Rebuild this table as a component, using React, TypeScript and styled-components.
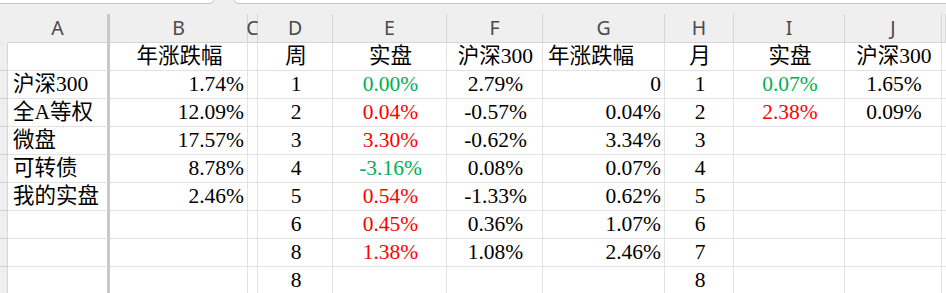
import { Fragment } from 'react'
import styled, { createGlobalStyle } from 'styled-components'

const GlobalStyle = createGlobalStyle`
  html, body {
    margin: 0;
    padding: 0;
    background: #FFFFFF;
    overflow: hidden;
  }
`

const COLUMNS = '8px 102px 138px 10px 75px 114px 96px 122px 69px 111px 97px 1fr'

type Align = 'left' | 'center' | 'right'
type Tone = 'black' | 'red' | 'green'

const TONES: Record<Tone, string> = {
  black: '#000000',
  red: '#FF0000',
  green: '#00B050'
}

const Page = styled.div`
  position: relative;
  width: 946px;
  height: 293px;
  overflow: hidden;
  background: #FFFFFF;
`

const TopStrip = styled.div`
  height: 3px;
  background: #FFFFFF;
  border-bottom: 1px solid #C4C4C4;
`

const TabNotch = styled.svg`
  position: absolute;
  left: 209px;
  top: 0;
`

const HeaderBand = styled.div`
  background: #EFEFEF;
  padding-top: 10px;
`

const Grid = styled.div`
  display: grid;
  grid-template-columns: ${COLUMNS};
`

const Corner = styled.div`
  height: 29px;
`

const ColHead = styled.div<{ $freeze?: boolean }>`
  box-sizing: border-box;
  height: 29px;
  min-width: 0;
  display: flex;
  align-items: center;
  justify-content: center;
  overflow: visible;
  white-space: nowrap;
  border-bottom: 1px solid #D6D6D6;
  border-right: ${({ $freeze }) => ($freeze ? '3px solid #C8C8C8' : '1px solid #D6D6D6')};
  font-family: 'Noto Sans', 'Liberation Sans', sans-serif;
  font-size: 19.5px;
  color: #4A4A4A;
  padding-bottom: 1px;
`

const RowHead = styled.div`
  box-sizing: border-box;
  height: 28px;
  background: #EFEFEF;
  border-right: 1px solid #D6D6D6;
  border-bottom: 1px solid #D0D0D0;
`

const Cell = styled.div<{ $align: Align; $tone: Tone; $freeze?: boolean }>`
  box-sizing: border-box;
  height: 28px;
  border-bottom: 1px solid #E1E1E1;
  border-right: ${({ $freeze }) => ($freeze ? '3px solid #C8C8C8' : '1px solid #E1E1E1')};
  padding: 0 3px 0 5px;
  display: flex;
  align-items: flex-end;
  justify-content: ${({ $align }) =>
    $align === 'left' ? 'flex-start' : $align === 'right' ? 'flex-end' : 'center'};
  white-space: nowrap;
  overflow: visible;
  font-family: 'Liberation Serif', 'Noto Sans CJK SC', serif;
  font-size: 21.5px;
  line-height: 27px;
  color: ${({ $tone }) => TONES[$tone]};
`

type CellData = { text: string; tone?: Tone }

// alignment per column (A..K) for the title row and for the value rows
const headAlign: Align[] = ['left', 'center', 'center', 'center', 'center', 'center', 'left', 'center', 'center', 'center', 'left']
const bodyAlign: Align[] = ['left', 'right', 'center', 'center', 'center', 'center', 'right', 'center', 'center', 'center', 'left']

const letters = ['A', 'B', 'C', 'D', 'E', 'F', 'G', 'H', 'I', 'J', '']

const r = (t: string): CellData => ({ text: t, tone: 'red' })
const g = (t: string): CellData => ({ text: t, tone: 'green' })
const b = (t: string): CellData => ({ text: t })

const rows: CellData[][] = [
  [b(''), b('年涨跌幅'), b(''), b('周'), b('实盘'), b('沪深300'), b('年涨跌幅'), b('月'), b('实盘'), b('沪深300'), b('')],
  [b('沪深300'), b('1.74%'), b(''), b('1'), g('0.00%'), b('2.79%'), b('0'), b('1'), g('0.07%'), b('1.65%'), b('')],
  [b('全A等权'), b('12.09%'), b(''), b('2'), r('0.04%'), b('-0.57%'), b('0.04%'), b('2'), r('2.38%'), b('0.09%'), b('')],
  [b('微盘'), b('17.57%'), b(''), b('3'), r('3.30%'), b('-0.62%'), b('3.34%'), b('3'), b(''), b(''), b('')],
  [b('可转债'), b('8.78%'), b(''), b('4'), g('-3.16%'), b('0.08%'), b('0.07%'), b('4'), b(''), b(''), b('')],
  [b('我的实盘'), b('2.46%'), b(''), b('5'), r('0.54%'), b('-1.33%'), b('0.62%'), b('5'), b(''), b(''), b('')],
  [b(''), b(''), b(''), b('6'), r('0.45%'), b('0.36%'), b('1.07%'), b('6'), b(''), b(''), b('')],
  [b(''), b(''), b(''), b('8'), r('1.38%'), b('1.08%'), b('2.46%'), b('7'), b(''), b(''), b('')],
  [b(''), b(''), b(''), b('8'), b(''), b(''), b(''), b('8'), b(''), b(''), b('')]
]

export default function App() {
  return (
    <Page>
      <GlobalStyle />
      <TopStrip />
      <TabNotch width="30" height="5" viewBox="0 0 30 5">
        <path d="M0 3.5 Q4 3.5 5 0 L25 0 Q26 3.5 30 3.5 L30 5 L0 5 Z" fill="#EFEFEF" />
        <path d="M0 3.5 Q4 3.5 5 0 M25 0 Q26 3.5 30 3.5" fill="none" stroke="#C4C4C4" strokeWidth="1" />
      </TabNotch>
      <HeaderBand>
        <Grid>
          <Corner />
          {letters.map((l, i) => (
            <ColHead key={i} $freeze={i === 0}>
              {l}
            </ColHead>
          ))}
        </Grid>
      </HeaderBand>
      <Grid>
        {rows.map((row, ri) => (
          <Fragment key={ri}>
            <RowHead />
            {row.map((c, ci) => (
              <Cell
                key={ci}
                $align={ri === 0 ? headAlign[ci] : bodyAlign[ci]}
                $tone={c.tone ?? 'black'}
                $freeze={ci === 0}
              >
                {c.text}
              </Cell>
            ))}
          </Fragment>
        ))}
      </Grid>
    </Page>
  )
}
